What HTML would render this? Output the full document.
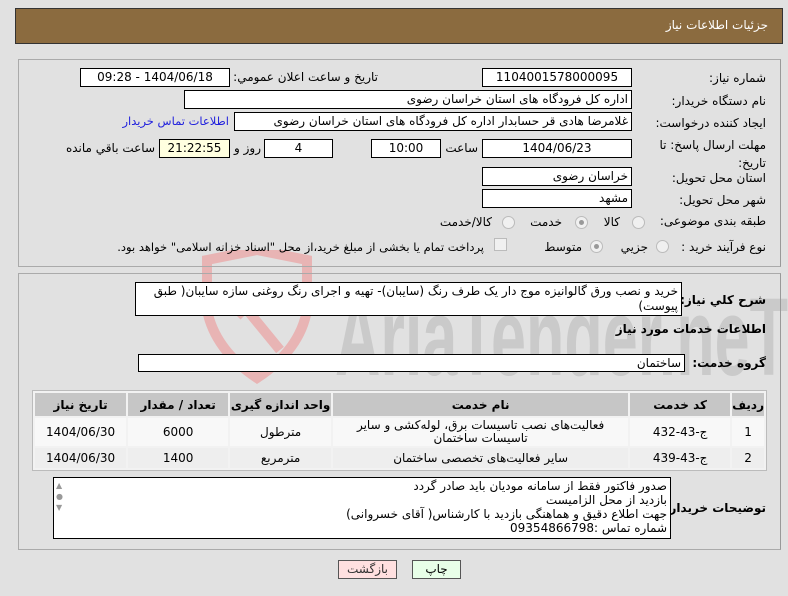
<!DOCTYPE html>
<html><head><meta charset="utf-8"><style>
*{box-sizing:border-box;margin:0;padding:0}
body{width:788px;height:596px;background:#e1e1e1;font-family:"DejaVu Sans","Noto Sans CJK SC",sans-serif;font-size:12px;color:#000;position:relative;overflow:hidden}
.a{position:absolute;white-space:nowrap}
.box{position:absolute;background:#fff;border:1px solid #000;height:19px;line-height:17px;padding:0 3px;direction:rtl;text-align:right;white-space:nowrap;overflow:hidden;z-index:2}
.c{text-align:center}
.l{direction:rtl;text-align:right}
.panel{position:absolute;border:1px solid #aaa;border-right-color:#999}
.rad{position:absolute;width:13px;height:13px;border-radius:50%;border:1px solid #bbb;background:#f0f0f0}
.rad.on::after{content:"";position:absolute;left:3px;top:3px;width:5px;height:5px;border-radius:50%;background:#999}
table{position:absolute;border-collapse:separate;border-spacing:2px;background:#f2f2f2;border:1px solid #bbb;direction:rtl}
td,th{text-align:center;font-size:12px}
th{background:#c6c6c6;height:23px;font-weight:bold}
.b{font-weight:bold;font-size:12px}
</style></head><body>
<svg class="a" style="left:195px;top:250px" width="593" height="140" viewBox="0 0 593 140">
<path d="M12 10 L62 0 L112 10 L112 60 Q105 100 62 128 Q20 100 12 60 Z" fill="none" stroke="#e8b4b4" stroke-width="10"/>
<path d="M40 45 L85 100 M70 38 L42 66" stroke="#e8b4b4" stroke-width="10"/>
<text x="140" y="125" font-family="Liberation Sans" font-size="110" font-weight="bold" fill="#cacaca" textLength="453" lengthAdjust="spacingAndGlyphs">AriaTender.neT</text>
</svg>
<div class="a" style="left:15px;top:8px;width:768px;height:36px;background:#8b6b3f;border:1px solid #333"></div>
<div class="a" style="right:20px;top:18px;color:#fff">جزئیات اطلاعات نیاز</div>

<div class="panel" style="left:18px;top:59px;width:763px;height:208px"></div>
<div class="a l" style="right:22px;top:71px">شماره نیاز:</div>
<div class="box c" style="left:482px;top:68px;width:150px">1104001578000095</div>
<div class="a l" style="right:410px;top:70px">تاریخ و ساعت اعلان عمومي:</div>
<div class="box c" style="left:80px;top:68px;width:150px">1404/06/18 - 09:28</div>
<div class="a l" style="right:22px;top:94px">نام دستگاه خریدار:</div>
<div class="box" style="left:184px;top:90px;width:448px">اداره کل فرودگاه های استان خراسان رضوی</div>
<div class="a l" style="right:22px;top:116px">ایجاد کننده درخواست:</div>
<div class="box" style="left:234px;top:112px;width:398px">غلامرضا هادی قر حسابدار اداره کل فرودگاه های استان خراسان رضوی</div>
<div class="a l" style="right:559px;top:114px;color:#2222dd;font-size:11.5px">اطلاعات تماس خریدار</div>
<div class="a l" style="right:22px;top:138px">مهلت ارسال پاسخ: تا</div>
<div class="a l" style="right:22px;top:156px">تاریخ:</div>
<div class="box c" style="left:482px;top:139px;width:150px">1404/06/23</div>
<div class="a l" style="right:310px;top:141px">ساعت</div>
<div class="box c" style="left:371px;top:139px;width:70px">10:00</div>
<div class="box c" style="left:264px;top:139px;width:69px">4</div>
<div class="a l" style="right:527px;top:141px">روز و</div>
<div class="box c" style="left:159px;top:139px;width:71px;background:#ffffe0">21:22:55</div>
<div class="a l" style="right:633px;top:141px">ساعت باقي مانده</div>
<div class="a l" style="right:22px;top:171px">استان محل تحویل:</div>
<div class="box" style="left:482px;top:167px;width:150px">خراسان رضوی</div>
<div class="a l" style="right:22px;top:193px">شهر محل تحویل:</div>
<div class="box" style="left:482px;top:189px;width:150px">مشهد</div>
<div class="a l" style="right:22px;top:214px">طبقه بندی موضوعی:</div>
<div class="rad" style="left:632px;top:216px"></div><div class="a l" style="right:168px;top:215px">کالا</div>
<div class="rad on" style="left:575px;top:216px"></div><div class="a l" style="right:226px;top:215px">خدمت</div>
<div class="rad" style="left:502px;top:216px"></div><div class="a l" style="right:296px;top:215px">کالا/خدمت</div>
<div class="a l" style="right:22px;top:240px">نوع فرآیند خرید :</div>
<div class="rad" style="left:656px;top:240px"></div><div class="a l" style="right:140px;top:240px">جزيي</div>
<div class="rad on" style="left:590px;top:240px"></div><div class="a l" style="right:206px;top:240px">متوسط</div>
<div class="a" style="left:494px;top:238px;width:13px;height:13px;border:1px solid #bbb;background:#f0f0f0"></div>
<div class="a l" style="right:304px;top:240px;font-size:11.5px">پرداخت تمام یا بخشی از مبلغ خرید،از محل "اسناد خزانه اسلامی" خواهد بود.</div>

<div class="panel" style="left:18px;top:273px;width:763px;height:277px"></div>
<div class="a l b" style="right:22px;top:293px">شرح کلي نیاز:</div>
<div class="box" style="left:135px;top:282px;width:547px;height:34px;line-height:15px;white-space:normal;padding-top:1px">خرید و نصب ورق گالوانیزه موج دار یک طرف رنگ (سایبان)- تهیه و اجرای رنگ روغنی سازه سایبان( طبق پیوست)</div>
<div class="a l b" style="right:22px;top:322px">اطلاعات خدمات مورد نیاز</div>
<div class="a l b" style="right:22px;top:356px">گروه خدمت:</div>
<div class="box" style="left:138px;top:354px;width:547px;height:18px;line-height:16px">ساختمان</div>
<table style="left:32px;top:390px;width:735px">
<tr><th style="width:24px">ردیف</th><th style="width:100px">کد خدمت</th><th style="width:295px">نام خدمت</th><th style="width:101px">واحد اندازه گیری</th><th style="width:100px">تعداد / مقدار</th><th>تاریخ نیاز</th></tr>
<tr style="height:28px;background:#f8f8f8"><td>1</td><td>ج-43-432</td><td style="line-height:13px">فعالیت‌های نصب تاسیسات برق، لوله‌کشی و سایر تاسیسات ساختمان</td><td>مترطول</td><td>6000</td><td>1404/06/30</td></tr>
<tr style="height:20px;background:#eeeeee"><td>2</td><td>ج-43-439</td><td>سایر فعالیت‌های تخصصی ساختمان</td><td>مترمربع</td><td>1400</td><td>1404/06/30</td></tr>
</table>
<div class="a l b" style="right:22px;top:501px">توضیحات خریدار:</div>
<div class="box" style="left:53px;top:477px;width:618px;height:62px;line-height:14px;white-space:normal;padding-top:1px">صدور فاکتور فقط از سامانه مودیان باید صادر گردد<br>بازدید از محل الزامیست<br>جهت اطلاع دقیق و هماهنگی بازدید با کارشناس( آقای خسروانی)<br>شماره تماس :09354866798</div>
<div class="a" style="left:56px;top:480px;color:#999;font-size:8px;line-height:11px;z-index:3">▲<br>●<br>▼</div>
<div class="a c" style="left:338px;top:560px;width:59px;height:19px;border:1px solid #555;background:#ffe0e0;line-height:17px;color:#333">بازگشت</div>
<div class="a c" style="left:412px;top:560px;width:49px;height:19px;border:1px solid #555;background:#e8ffe8;line-height:17px">چاپ</div>
</body></html>
